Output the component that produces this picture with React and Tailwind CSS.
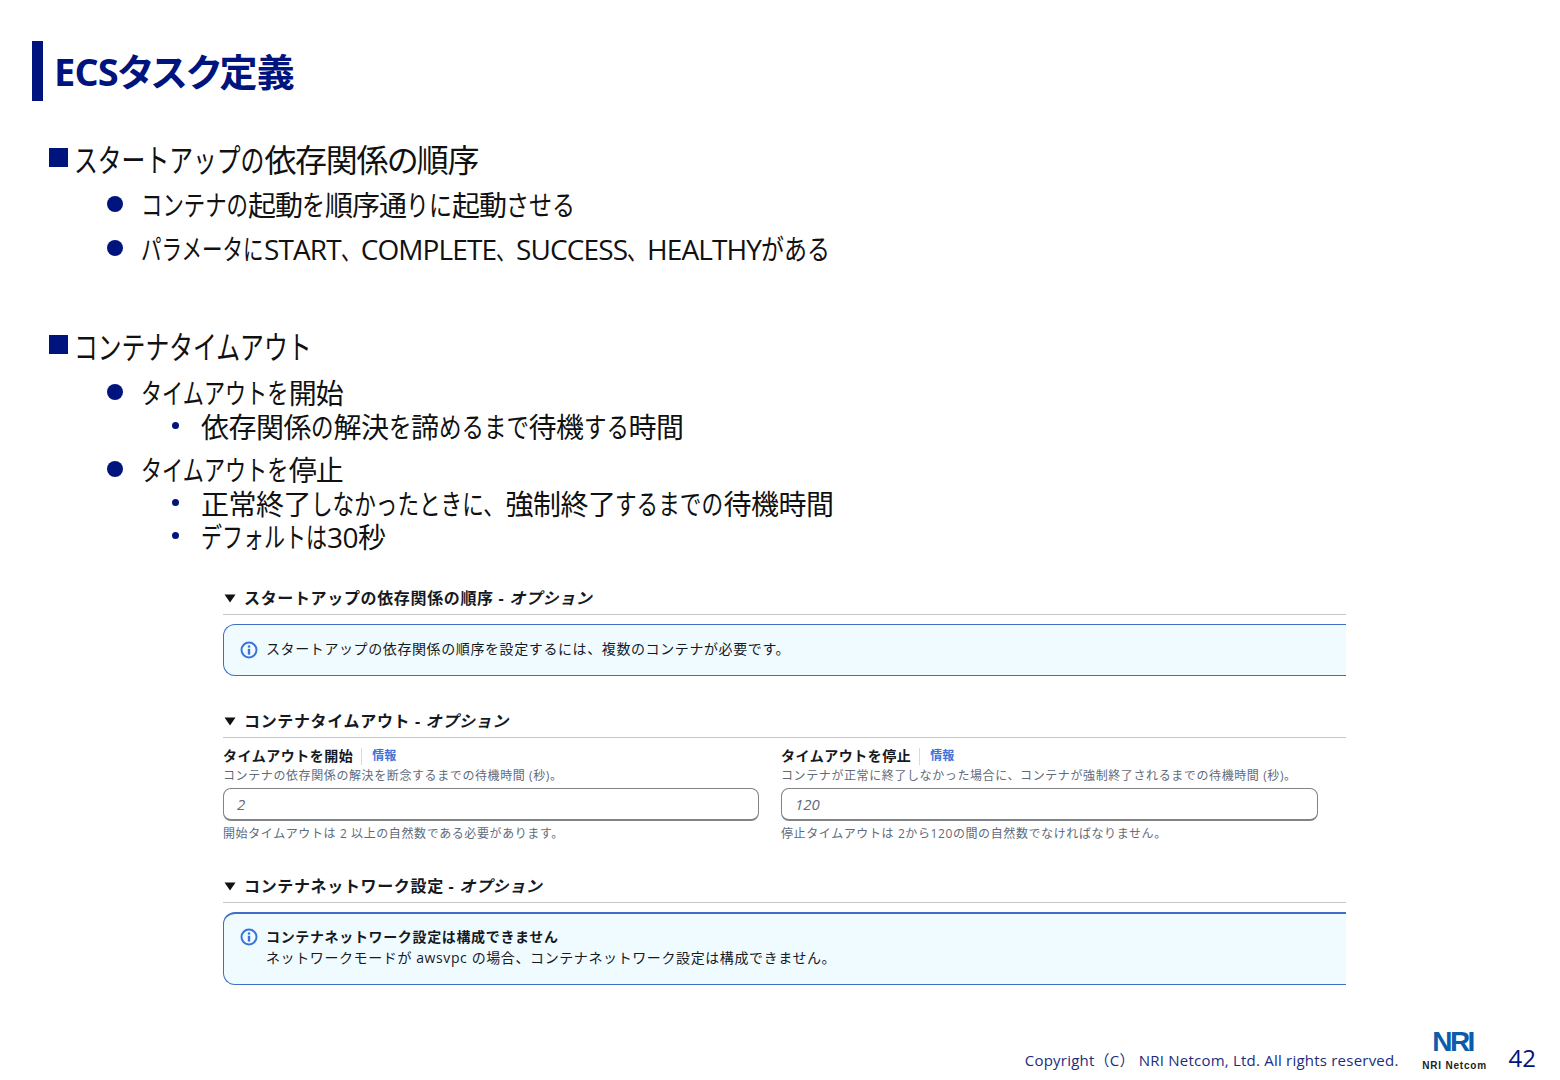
const JP = "font-['Open_Sans','Noto_Sans_CJK_JP',sans-serif] [font-feature-settings:'palt']";

// Meiryo UI has tall, narrow kana: squeeze each run to its pitch and reserve the narrowed width
function Kana({ children, pitch, size }) {
	return (
		<span className="inline-block whitespace-nowrap" style={{ width: children.length * pitch }}>
			<span className="inline-block origin-left tracking-normal [font-feature-settings:normal]" style={{ transform: `scaleX(${pitch / size})` }}>{children}</span>
		</span>
	);
}
const K1 = ({ children }) => <Kana pitch={23.8} size={32}>{children}</Kana>;
const K2 = ({ children, pitch = 21.4 }) => <Kana pitch={pitch} size={28}>{children}</Kana>;
const K3 = ({ children, pitch = 21.8 }) => <Kana pitch={pitch} size={28}>{children}</Kana>;
const Latin = ({ children }) => <span className="tracking-[-0.9px]">{children}</span>;
const Comma = () => <Kana pitch={20} size={28}>、</Kana>;

function Level1({ children, className }) {
	return (
		<div className={`flex items-center h-[44px] pl-[49px] ${className}`}>
			<span className="w-[19px] h-[19px] bg-[#00147d] shrink-0 -mt-[5px]"></span>
			<span className="ml-[6px] text-[32px] leading-none tracking-[-1.3px] text-[#111] whitespace-nowrap">{children}</span>
		</div>
	);
}

function Level2({ children, className }) {
	return (
		<div className={`flex items-center h-[44px] pl-[107px] ${className}`}>
			<span className="w-[16px] h-[16px] rounded-full bg-[#00147d] shrink-0 -mt-[2px]"></span>
			<span className="ml-[18px] text-[28px] leading-none tracking-[-1px] text-[#111] whitespace-nowrap">{children}</span>
		</div>
	);
}

function Level3({ children, className }) {
	return (
		<div className={`flex items-center h-[33px] pl-[172px] ${className}`}>
			<span className="w-[7px] h-[7px] rounded-full bg-[#00147d] shrink-0 -mt-[2px]"></span>
			<span className="ml-[22px] text-[28px] leading-none tracking-[-0.5px] text-[#111] whitespace-nowrap">{children}</span>
		</div>
	);
}

function SectionTitle({ children, className }) {
	return (
		<div className={`flex items-center h-[24px] ${className}`}>
			<svg width="12" height="10" viewBox="0 0 12 10" className="ml-[1px] shrink-0">
				<path d="M0.5 1.5h11L6 9.5z" fill="#111" />
			</svg>
			<span className="ml-[8px] text-[16px] font-bold leading-none tracking-[0.65px] text-[#16191f] whitespace-nowrap">
				{children} - <em className="italic">オプション</em>
			</span>
		</div>
	);
}

function InfoIcon({ className }) {
	return (
		<svg width="18" height="18" viewBox="0 0 18 18" className={`shrink-0 ${className}`}>
			<circle cx="9" cy="9" r="7.5" fill="none" stroke="#3b74d8" strokeWidth="2" />
			<rect x="7.8" y="7.8" width="2.4" height="5.8" fill="#3b74d8" />
			<rect x="7.8" y="4.4" width="2.4" height="2.2" fill="#3b74d8" />
		</svg>
	);
}

function Field({ label, desc, value, hint, className }) {
	return (
		<div className={className}>
			<div className="flex items-center h-[18px]">
				<span className="text-[14px] font-bold leading-none tracking-[0.5px] text-[#16191f]">{label}</span>
				<span className="ml-[8px] w-px h-[17px] bg-[#d5dbdb]"></span>
				<span className="ml-[10px] text-[12px] font-bold leading-none text-[#3b74d8]">情報</span>
			</div>
			<div className="mt-[3px] h-[15px] text-[12px] leading-[15px] tracking-[0.6px] text-[#5f6b7a] whitespace-nowrap">{desc}</div>
			<div className="mt-[5px] h-[33px] rounded-[8px] border border-[#7f8488] border-b-2 flex items-center px-[13px] text-[15px] italic text-[#5f6b7a] bg-white">
				{value}
			</div>
			<div className="mt-[5px] h-[15px] text-[12px] leading-[15px] tracking-[0.6px] text-[#5f6b7a] whitespace-nowrap">{hint}</div>
		</div>
	);
}

export default function App() {
	return (
		<div className={`relative w-[1560px] h-[1080px] bg-white overflow-hidden flex flex-col ${JP}`}>
			{/* Title */}
			<div className="flex items-center mt-[41px] ml-[32px] h-[60px]">
				<span className="w-[11px] h-[60px] bg-[#00147d]"></span>
				<h1 className="ml-[11px] text-[38px] font-bold leading-none tracking-[-0.9px] text-[#00147d]">ECSタスク定義</h1>
			</div>

			{/* Bullets */}
			<div className="mt-[37px]">
				<Level1><K1>スタートアップの</K1>依存関係の順序</Level1>
				<Level2 className="mt-[1px]"><K2>コンテナの</K2>起動<K2 pitch={23}>を</K2>順序通<K2 pitch={23}>りに</K2>起動<K2 pitch={23}>させる</K2></Level2>
				<Level2>
					<K2 pitch={20.5}>パラメータに</K2><Latin>START</Latin><Comma /><Latin>COMPLETE</Latin><Comma /><Latin>SUCCESS</Latin><Comma /><Latin>HEALTHY</Latin><K2 pitch={23}>がある</K2>
				</Level2>
				<Level1 className="mt-[54px]"><K1>コンテナタイムアウト</K1></Level1>
				<Level2 className="mt-[2px]"><K2 pitch={21.1}>タイムアウトを</K2>開始</Level2>
				<Level3 className="-mt-[5px]">依存関係<K3 pitch={22.5}>の</K3>解決<K3 pitch={22.5}>を</K3>諦<K3 pitch={22.5}>めるまで</K3>待機<K3 pitch={22.5}>する</K3>時間</Level3>
				<Level2 className="mt-[5px]"><K2 pitch={21.1}>タイムアウトを</K2>停止</Level2>
				<Level3 className="-mt-[5px]">正常終了<K3 pitch={21.6}>しなかったときに、</K3>強制終了<K3 pitch={21.6}>するまでの</K3>待機時間</Level3>
				<Level3><K3 pitch={21}>デフォルトは</K3>30秒</Level3>
			</div>

			{/* Embedded console capture */}
			<div className="ml-[223px] w-[1123px] mt-[33px] [font-feature-settings:normal]">
				<SectionTitle>スタートアップの依存関係の順序</SectionTitle>
				<div className="mt-[4px] h-px bg-[#c6c9cc]"></div>
				<div className="mt-[9px] h-[52px] flex items-center pl-[16px] rounded-l-[12px] border border-r-0 border-[#3f6fc4] bg-[#f0fbff]">
					<InfoIcon />
					<span className="ml-[8px] -mt-[2px] text-[14px] leading-none tracking-[0.6px] text-[#16191f]">スタートアップの依存関係の順序を設定するには、複数のコンテナが必要です。</span>
				</div>

				<SectionTitle className="mt-[33px]">コンテナタイムアウト</SectionTitle>
				<div className="mt-[4px] h-px bg-[#c6c9cc]"></div>
				<div className="mt-[9px] flex">
					<Field
						className="w-[536px]"
						label="タイムアウトを開始"
						desc="コンテナの依存関係の解決を断念するまでの待機時間 (秒)。"
						value="2"
						hint="開始タイムアウトは 2 以上の自然数である必要があります。"
					/>
					<Field
						className="w-[537px] ml-[22px]"
						label="タイムアウトを停止"
						desc="コンテナが正常に終了しなかった場合に、コンテナが強制終了されるまでの待機時間 (秒)。"
						value="120"
						hint="停止タイムアウトは 2から120の間の自然数でなければなりません。"
					/>
				</div>

				<SectionTitle className="mt-[33px]">コンテナネットワーク設定</SectionTitle>
				<div className="mt-[4px] h-px bg-[#c6c9cc]"></div>
				<div className="mt-[9px] h-[73px] flex items-start pt-[12px] pl-[16px] rounded-l-[12px] border border-r-0 border-t-2 border-[#3f6fc4] bg-[#f0fbff]">
					<InfoIcon className="mt-[2px]" />
					<div className="ml-[8px]">
						<div className="text-[14px] font-bold leading-[21px] tracking-[0.65px] text-[#16191f]">コンテナネットワーク設定は構成できません</div>
						<div className="text-[14px] leading-[21px] tracking-[0.6px] text-[#16191f]">ネットワークモードが awsvpc の場合、コンテナネットワーク設定は構成できません。</div>
					</div>
				</div>
			</div>

			{/* Footer */}
			<div className="mt-auto flex items-end justify-end h-[50px] pr-[24px] pb-[10px] [font-feature-settings:normal]">
				<span className="text-[15px] leading-none tracking-[0.22px] text-[#1a2d80] mb-[2px] whitespace-nowrap">Copyright（C）&nbsp;NRI Netcom, Ltd. All rights reserved.</span>
				<div className="ml-[24px] w-[64px] -mb-[2px] flex flex-col items-center">
					<span className="mr-[4px] font-['Liberation_Sans',sans-serif] text-[28px] font-bold leading-[22px] tracking-[-2.5px] text-[#0b5cab] mb-[7px]">NRI</span>
					<span className="font-['Liberation_Sans',sans-serif] text-[10px] font-bold leading-[12px] tracking-[0.8px] text-[#222] whitespace-nowrap">NRI Netcom</span>
				</div>
				<span className="ml-[22px] text-[24px] leading-none text-[#00147d]">42</span>
			</div>
		</div>
	);
}
